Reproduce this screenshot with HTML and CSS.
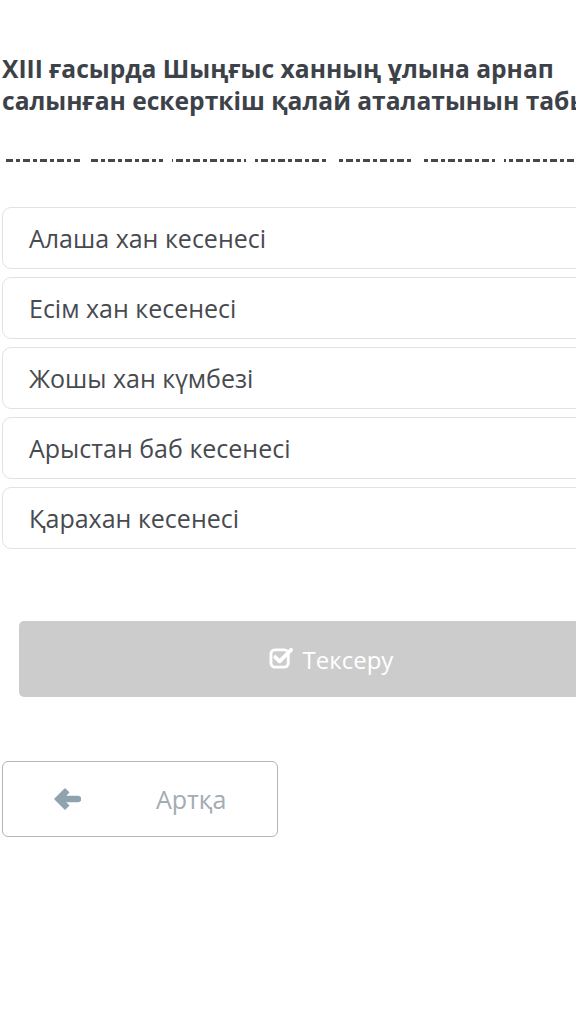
FILE: index.html
```html
<!DOCTYPE html>
<html lang="kk">
<head>
    <meta charset="UTF-8">
    <meta name="viewport" content="width=device-width, initial-scale=1.0">
    <title>Тест</title>
    <link rel="stylesheet" href="styles.css">
</head>
<body>
    <div class="quiz">
        <h2 class="question">XIII ғасырда Шыңғыс ханның ұлына арнап<br>салынған ескерткіш қалай аталатынын табыңыз.</h2>
        <div class="dash-line"></div>

        <div class="answers">
            <div class="answer">Алаша хан кесенесі</div>
            <div class="answer">Есім хан кесенесі</div>
            <div class="answer">Жошы хан күмбезі</div>
            <div class="answer">Арыстан баб кесенесі</div>
            <div class="answer">Қарахан кесенесі</div>
        </div>

        <button class="check-btn">
            <svg class="check-icon" viewBox="0 0 26 24" width="25" height="23">
                <rect x="2" y="4" width="18" height="18" rx="4" fill="none" stroke="#fff" stroke-width="3"/>
                <path d="M6.5 11.5 L11 16 L23 4" fill="none" stroke="#fff" stroke-width="4" stroke-linecap="round" stroke-linejoin="round"/>
            </svg>
            Тексеру
        </button>

        <button class="back-btn">
            <svg class="back-icon" viewBox="0 0 28 24" width="28" height="24">
                <path d="M12 2 L2 12 L12 22 L15.5 18.5 L11.5 14.5 H25 A2.5 2.5 0 0 0 25 9.5 H11.5 L15.5 5.5 Z" fill="#8ea3ae" stroke="#8ea3ae" stroke-width="1.5" stroke-linejoin="round"/>
            </svg>
            <span>Артқа</span>
        </button>
    </div>
</body>
</html>
```

FILE: styles.css
```css
html, body {
    margin: 0;
    overflow: hidden;
}
body {
    font-family: "Open Sans", "Noto Sans", sans-serif;
    background-color: #fff;
    width: 576px;
    height: 1027px;
}
.quiz {
    width: 640px;
    padding: 53px 0 0 2px;
}
.question {
    margin: 0;
    font-size: 24.6px;
    line-height: 32px;
    font-weight: 700;
    color: #3d4249;
    white-space: nowrap;
}
.dash-line {
    height: 3px;
    margin: 42px 0 0 4px;
    background:
        repeating-linear-gradient(90deg, transparent 0 74px, #fff 74px 83px),
        repeating-linear-gradient(90deg, transparent 0 31px, #fff 31px 34px),
        repeating-linear-gradient(90deg, #45484d 0 7px, transparent 7px 10px, #45484d 10px 14px, transparent 14px 17px);
}
.answers {
    display: flex;
    flex-direction: column;
    gap: 8px;
    margin-top: 45px;
}
.answer {
    height: 60px;
    border: 1px solid #e2e2e2;
    border-radius: 9px;
    padding-left: 26px;
    display: flex;
    align-items: center;
    font-size: 25px;
    color: #474a4f;
}
.check-btn {
    display: flex;
    align-items: center;
    justify-content: center;
    gap: 9px;
    width: 624px;
    height: 76px;
    margin: 72px 0 0 17px;
    border: none;
    border-radius: 5px;
    background-color: #cccccc;
    color: #fff;
    font-family: inherit;
    font-size: 24px;
}
.check-icon {
    margin-top: -3px;
}
.back-btn {
    display: flex;
    align-items: center;
    width: 276px;
    height: 76px;
    margin-top: 64px;
    padding: 0 0 0 50px;
    border: 1px solid #b5b5b5;
    border-radius: 6px;
    background-color: #fff;
    color: #a2acb2;
    font-family: inherit;
    font-size: 25px;
}
.back-btn span {
    margin-left: 75px;
}
```
